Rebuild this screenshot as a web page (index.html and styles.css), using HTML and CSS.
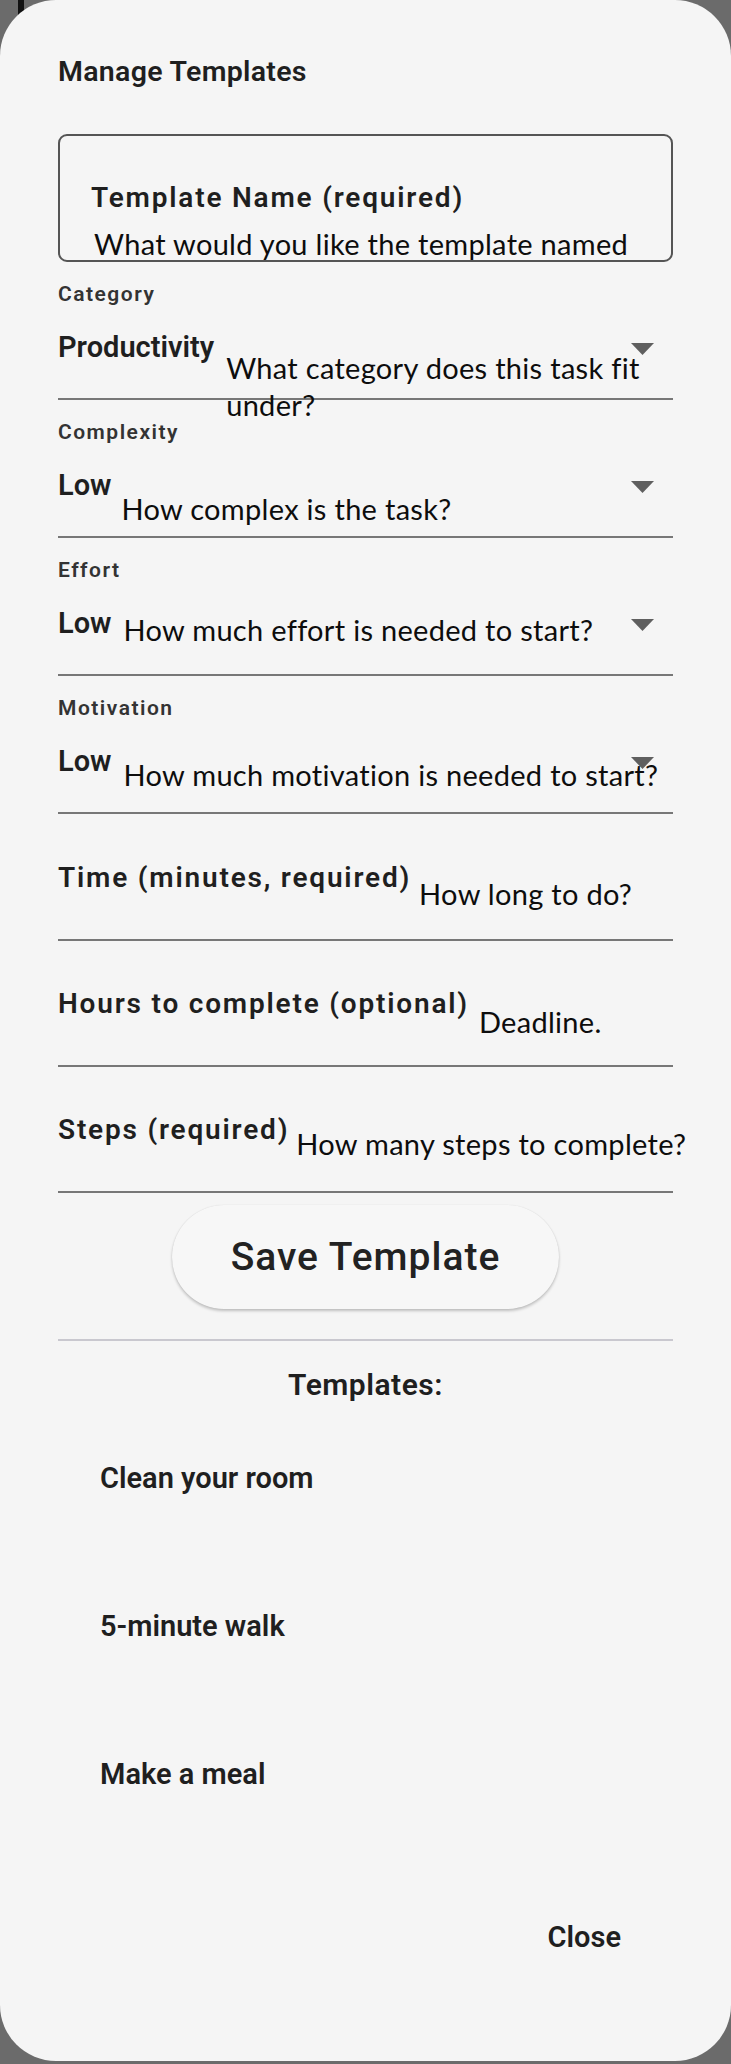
FILE: index.html
```html
<!DOCTYPE html>
<html lang="en">
<head>
<meta charset="utf-8">
<title>Manage Templates</title>
<link rel="stylesheet" href="styles.css">
</head>
<body>
<div class="backdrop-bar"></div>
<div class="dialog">
  <h1 class="title">Manage Templates</h1>

  <div class="name-box">
    <div class="field-label">Template Name (required)</div>
    <div class="hint hint-name">What would you like the template named</div>
  </div>

  <div class="dd">
    <div class="dd-label">Category</div>
    <div class="dd-row">
      <span class="dd-value">Productivity</span>
      <svg class="dd-arrow" viewBox="0 0 23 12"><polygon points="0,0 23,0 11.5,12" fill="#5f5f5f"/></svg>
      <span class="hint dd-hint h-cat">What category does this task fit under?</span>
    </div>
  </div>

  <div class="dd">
    <div class="dd-label">Complexity</div>
    <div class="dd-row">
      <span class="dd-value">Low</span>
      <svg class="dd-arrow" viewBox="0 0 23 12"><polygon points="0,0 23,0 11.5,12" fill="#5f5f5f"/></svg>
      <span class="hint dd-hint h-cpx">How complex is the task?</span>
    </div>
  </div>

  <div class="dd">
    <div class="dd-label">Effort</div>
    <div class="dd-row">
      <span class="dd-value">Low</span>
      <svg class="dd-arrow" viewBox="0 0 23 12"><polygon points="0,0 23,0 11.5,12" fill="#5f5f5f"/></svg>
      <span class="hint dd-hint h-eff">How much effort is needed to start?</span>
    </div>
  </div>

  <div class="dd">
    <div class="dd-label">Motivation</div>
    <div class="dd-row">
      <span class="dd-value">Low</span>
      <svg class="dd-arrow" viewBox="0 0 23 12"><polygon points="0,0 23,0 11.5,12" fill="#5f5f5f"/></svg>
      <span class="hint dd-hint h-mot">How much motivation is needed to start?</span>
    </div>
  </div>

  <div class="tf tf-time">
    <span class="field-label">Time (minutes, required)</span>
    <span class="hint tf-hint h-time">How long to do?</span>
  </div>

  <div class="tf">
    <span class="field-label">Hours to complete (optional)</span>
    <span class="hint tf-hint h-hours">Deadline.</span>
  </div>

  <div class="tf">
    <span class="field-label">Steps (required)</span>
    <span class="hint tf-hint h-steps">How many steps to complete?</span>
  </div>

  <div class="save-wrap">
    <button class="save-btn" type="button">Save Template</button>
  </div>

  <hr class="divider">

  <div class="list-title">Templates:</div>
  <ul class="tpl-list">
    <li>Clean your room</li>
    <li>5-minute walk</li>
    <li>Make a meal</li>
  </ul>

  <div class="actions">
    <button class="close-btn" type="button">Close</button>
  </div>
</div>
</body>
</html>
```

FILE: styles.css
```css
html, body {
  margin: 0;
  padding: 0;
}

body {
  width: 731px;
  height: 2064px;
  background: #6b6b6b;
  position: relative;
  overflow: hidden;
}

.backdrop-bar {
  position: absolute;
  left: 18px;
  top: 0;
  width: 6px;
  height: 16px;
  background: #111111;
}

.dialog {
  position: relative;
  width: 731px;
  height: 2061px;
  box-sizing: border-box;
  padding: 58px 58px 0;
  background: #f5f5f5;
  border-radius: 56px;
  font-family: Roboto, "Noto Sans", sans-serif;
  color: #1f1f1f;
}

.title {
  margin: 0;
  font-size: 28.5px;
  line-height: 28px;
  font-weight: 600;
  letter-spacing: 0.3px;
}

.name-box {
  margin-top: 48px;
  height: 128px;
  box-sizing: border-box;
  border: 2px solid #555555;
  border-radius: 9px;
  padding: 48px 0 0 31px;
}

.field-label {
  font-size: 28px;
  line-height: 28px;
  font-weight: 600;
  letter-spacing: 1.8px;
  white-space: nowrap;
  flex: none;
}

.hint {
  font-family: Lato, "Open Sans", sans-serif;
  font-size: 29px;
  line-height: 28px;
  letter-spacing: 0.3px;
  color: #0d0d0d;
}

.hint-name {
  margin-top: 18px;
  margin-left: 3px;
  white-space: nowrap;
}

.dd {
  margin-top: 22px;
}

.dd-label {
  font-size: 21px;
  line-height: 21px;
  font-weight: 600;
  letter-spacing: 1.5px;
  color: #333333;
}

.dd-row {
  margin-top: 28px;
  height: 67px;
  box-sizing: border-box;
  border-bottom: 2px solid #777777;
  display: flex;
  align-items: flex-start;
  position: relative;
}

.dd-value {
  flex: none;
  font-size: 29px;
  line-height: 29px;
  font-weight: 600;
}

.dd-arrow {
  position: absolute;
  right: 19px;
  top: 10px;
  width: 23px;
  height: 12px;
}

.dd-hint {
  position: relative;
  flex: 1;
  line-height: 37px;
  margin-left: 12px;
}

.h-cat { margin-top: 16px; }
.h-cpx { margin-top: 19px; margin-left: 10px; }
.h-eff { margin-top: 2px; }
.h-mot { margin-top: 9px; }

.tf {
  margin-top: 49px;
  height: 77px;
  box-sizing: border-box;
  border-bottom: 2px solid #777777;
  display: flex;
  align-items: flex-start;
}

.tf-time {
  margin-top: 50px;
}

.tf-hint {
  white-space: nowrap;
  margin-left: 8px;
}

.h-time { margin-top: 16px; }
.h-hours { margin-top: 18px; margin-left: 10px; }
.h-steps { margin-top: 14px; margin-left: 7px; }

.save-wrap {
  margin-top: 12px;
  display: flex;
  justify-content: center;
}

.save-btn {
  width: 387px;
  height: 104px;
  border: none;
  border-radius: 52px;
  background: #f7f7f7;
  box-shadow: 0 2px 3px rgba(0, 0, 0, 0.22), 0 0 1px rgba(0, 0, 0, 0.12);
  font-family: Roboto, "Noto Sans", sans-serif;
  font-size: 39px;
  font-weight: 500;
  letter-spacing: 1px;
  color: #222222;
  padding: 0;
}

.divider {
  margin: 30px 0 0;
  border: 0;
  height: 2px;
  background: #c9c8cf;
}

.list-title {
  margin-top: 29px;
  text-align: center;
  font-size: 30px;
  line-height: 30px;
  font-weight: 600;
  letter-spacing: 0.5px;
}

.tpl-list {
  list-style: none;
  margin: 4px 0 0;
  padding: 0;
}

.tpl-list li {
  height: 148px;
  display: flex;
  align-items: center;
  padding-left: 42px;
  font-size: 29px;
  line-height: 29px;
  font-weight: 600;
}

.actions {
  margin-top: 75px;
  display: flex;
  justify-content: flex-end;
  padding-right: 52px;
}

.close-btn {
  border: none;
  background: none;
  padding: 0;
  font-family: Roboto, "Noto Sans", sans-serif;
  font-size: 29px;
  line-height: 29px;
  font-weight: 600;
  color: #1f1f1f;
}
```
